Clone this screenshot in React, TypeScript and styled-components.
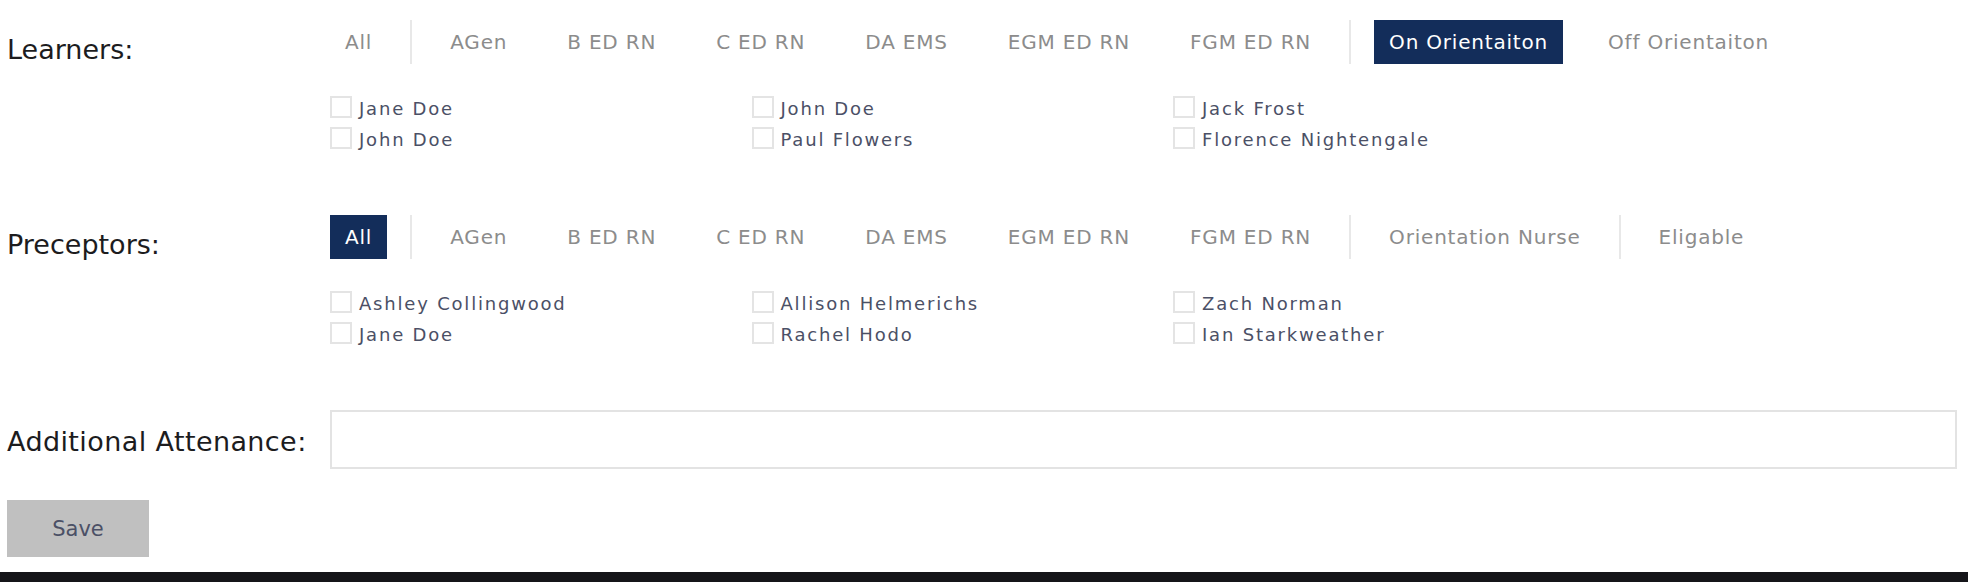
import React from 'react'
import styled, { createGlobalStyle } from 'styled-components'

const GlobalStyle = createGlobalStyle`
  html, body {
    margin: 0;
    padding: 0;
    background: #ffffff;
  }
  body {
    font-family: 'DejaVu Sans', 'Liberation Sans', sans-serif;
    overflow: hidden;
  }
`

const UNITS = ['AGen', 'B ED RN', 'C ED RN', 'DA EMS', 'EGM ED RN', 'FGM ED RN']

interface Roster {
  title: string
  groups: string[][]
  active: string
  people: string[]
}

const rosters: Roster[] = [
  {
    title: 'Learners:',
    groups: [['All'], UNITS, ['On Orientaiton', 'Off Orientaiton']],
    active: 'On Orientaiton',
    people: [
      'Jane Doe',
      'John Doe',
      'Jack Frost',
      'John Doe',
      'Paul Flowers',
      'Florence Nightengale',
    ],
  },
  {
    title: 'Preceptors:',
    groups: [['All'], UNITS, ['Orientation Nurse'], ['Eligable']],
    active: 'All',
    people: [
      'Ashley Collingwood',
      'Allison Helmerichs',
      'Zach Norman',
      'Jane Doe',
      'Rachel Hodo',
      'Ian Starkweather',
    ],
  },
]

export default function App(): JSX.Element {
  return (
    <>
      <GlobalStyle />
      <Page>
        {rosters.map((roster) => (
          <Section key={roster.title}>
            <SectionLabel>{roster.title}</SectionLabel>
            <Content>
              <TabBar>
                {roster.groups.map((group, gi) => (
                  <React.Fragment key={gi}>
                    {gi > 0 ? <TabDivider /> : null}
                    {group.map((name) => (
                      <Tab key={name} type="button" $active={name === roster.active}>
                        {name}
                      </Tab>
                    ))}
                  </React.Fragment>
                ))}
              </TabBar>
              <PeopleGrid>
                {roster.people.map((person, i) => (
                  <Person key={i}>
                    <Box type="checkbox" />
                    <PersonName>{person}</PersonName>
                  </Person>
                ))}
              </PeopleGrid>
            </Content>
          </Section>
        ))}
        <FieldRow>
          <FieldLabel>Additional Attenance:</FieldLabel>
          <TextField type="text" />
        </FieldRow>
        <SaveButton type="button">Save</SaveButton>
      </Page>
      <Footer />
    </>
  )
}

const Page = styled.div`
  padding: 20px 11px 0 7px;
`

const Section = styled.section`
  display: flex;
  align-items: flex-start;
  margin-bottom: 66px;
`

const SectionLabel = styled.div`
  flex: 0 0 323px;
  padding-top: 8px;
  font-size: 27px;
  line-height: 44px;
  color: #1c1c1e;
`

const Content = styled.div`
  display: flex;
  flex-direction: column;
  flex: 1;
`

const TabBar = styled.div`
  display: flex;
  align-items: center;
  height: 44px;
`

const Tab = styled.button<{ $active?: boolean }>`
  height: 44px;
  margin: 0 15px;
  padding: 0 15px;
  border: 0;
  font-family: inherit;
  font-size: 20px;
  letter-spacing: 0.8px;
  white-space: nowrap;
  cursor: pointer;
  background: ${(p) => (p.$active ? '#132d5a' : 'transparent')};
  color: ${(p) => (p.$active ? '#ffffff' : '#8c8c8c')};

  &:first-child {
    margin-left: 0;
  }
`

const TabDivider = styled.span`
  width: 2px;
  height: 44px;
  margin: 0 8px;
  background: #e8e8e8;
`

const PeopleGrid = styled.div`
  display: grid;
  grid-template-columns: repeat(3, 421.5px);
  grid-auto-rows: 22px;
  row-gap: 9px;
  margin-top: 32px;
`

const Person = styled.label`
  display: flex;
  align-items: flex-start;
  gap: 7px;
`

const Box = styled.input`
  appearance: none;
  margin: 0;
  width: 22px;
  height: 22px;
  border: 2px solid #e4e4e4;
  background: #ffffff;
`

const PersonName = styled.span`
  padding-top: 2px;
  font-size: 18px;
  line-height: 22px;
  letter-spacing: 1.8px;
  color: #4b5066;
  white-space: nowrap;
`

const FieldRow = styled.div`
  display: flex;
  align-items: center;
`

const FieldLabel = styled.div`
  flex: 0 0 323px;
  padding-top: 3px;
  font-size: 27px;
  letter-spacing: 0.4px;
  color: #1c1c1e;
`

const TextField = styled.input`
  flex: 1;
  box-sizing: border-box;
  height: 59px;
  margin: 0;
  border: 2px solid #e3e3e3;
  outline: none;
  font-family: inherit;
  font-size: 20px;
`

const SaveButton = styled.button`
  display: block;
  width: 142px;
  height: 57px;
  margin-top: 31px;
  border: 0;
  background: #c0c0c0;
  color: #4b5066;
  font-family: inherit;
  font-size: 21px;
`

const Footer = styled.div`
  height: 10px;
  margin-top: 15px;
  background: #151519;
`
